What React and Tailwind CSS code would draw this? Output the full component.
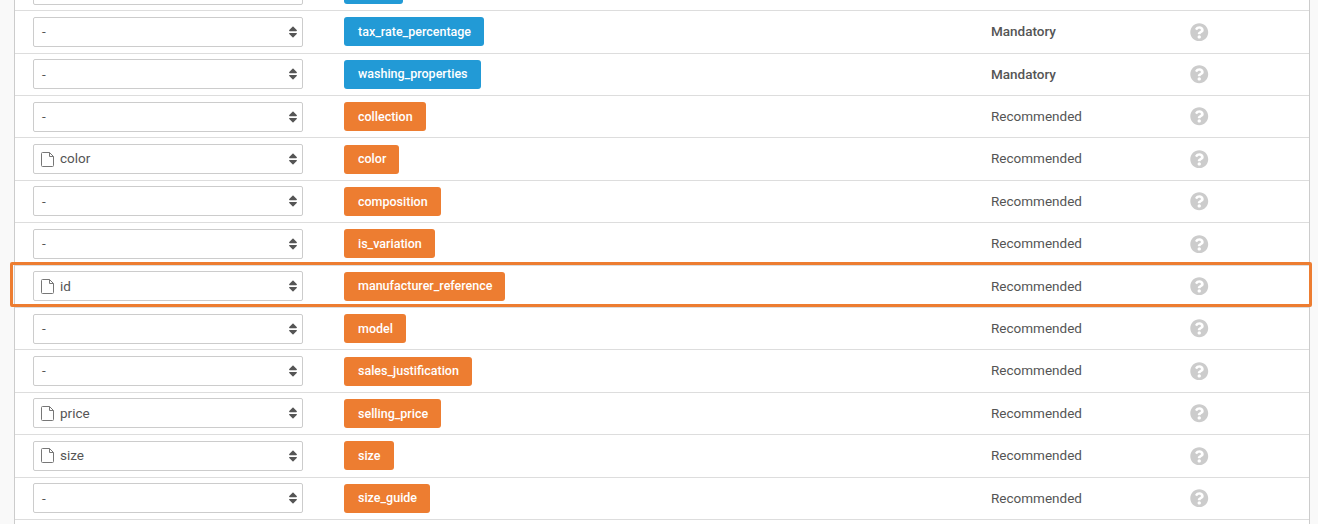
import { FaSort, FaQuestionCircle } from 'react-icons/fa'

const rows = [
  { value: '-', name: 'brand', level: 'Mandatory', color: 'blue' },
  { value: '-', name: 'tax_rate_percentage', level: 'Mandatory', color: 'blue' },
  { value: '-', name: 'washing_properties', level: 'Mandatory', color: 'blue' },
  { value: '-', name: 'collection', level: 'Recommended', color: 'orange' },
  { value: 'color', name: 'color', level: 'Recommended', color: 'orange' },
  { value: '-', name: 'composition', level: 'Recommended', color: 'orange' },
  { value: '-', name: 'is_variation', level: 'Recommended', color: 'orange' },
  { value: 'id', name: 'manufacturer_reference', level: 'Recommended', color: 'orange', highlight: true },
  { value: '-', name: 'model', level: 'Recommended', color: 'orange' },
  { value: '-', name: 'sales_justification', level: 'Recommended', color: 'orange' },
  { value: 'price', name: 'selling_price', level: 'Recommended', color: 'orange' },
  { value: 'size', name: 'size', level: 'Recommended', color: 'orange' },
  { value: '-', name: 'size_guide', level: 'Recommended', color: 'orange' },
]

const FileIcon = () => (
  <svg width="13" height="15" viewBox="0 0 13 15" fill="none" stroke="#777" strokeWidth="1" className="mr-[6px] shrink-0">
    <path d="M.5 1.500a1 1 0 0 1 1-1h7l4 4v9a1 1 0 0 1-1 1h-10a1 1 0 0 1-1-1z" />
    <path d="M8.500 .5v4h4" />
  </svg>
)

const Row = ({ row }) => (
  <div className="relative h-[42.4px] grid grid-cols-[311px_647px_199px_1fr] items-center pl-[18px] border-b border-[#dddddd]">
    {/* Mapping select */}
    <div className="flex items-center w-[270px] h-[30px] pl-[7px] pr-[3px] bg-white border border-[#cccccc] rounded-[2px]">
      {row.value !== '-' && <FileIcon />}
      <span className={`flex-1 mb-[1px] text-[13.5px] text-[#555555] ${row.value === '-' ? 'pl-[1px]' : ''}`}>{row.value}</span>
      <FaSort className="w-[12px] h-[14px] text-[#555555]" />
    </div>

    {/* Field badge */}
    <div>
      <span
        className={`inline-flex items-center h-[29px] pl-[14px] pr-[13px] pt-[1px] rounded-[3px] text-[12.5px] font-medium text-white ${
          row.color === 'blue' ? 'bg-[#229ad6]' : 'bg-[#ed7d31]'
        }`}
      >
        {row.name}
      </span>
    </div>

    <span className={`mb-[1px] text-[13.5px] text-[#555555] ${row.level === 'Mandatory' ? 'font-medium' : ''}`}>
      {row.level}
    </span>

    <FaQuestionCircle className="w-[18.5px] h-[18.5px] text-[#cccccc]" />

    {/* Highlight frame */}
    {row.highlight && (
      <div className="absolute left-[-5px] right-[-3px] top-[-4px] bottom-0 border-[3px] border-[#ed7d31] rounded-[2px]" />
    )}
  </div>
)

const App = () => {
  return (
    <div className="h-[524px] overflow-hidden bg-[#f9f9f9] px-[14px] font-['Roboto',sans-serif]">
      <div className="flex flex-col w-[1296px] h-full bg-white border-x border-[#cccccc]">
        <div className="-mt-[31.2px]">
          {rows.map((row) => (
            <Row key={row.name} row={row} />
          ))}
        </div>
      </div>
    </div>
  )
}

export default App
